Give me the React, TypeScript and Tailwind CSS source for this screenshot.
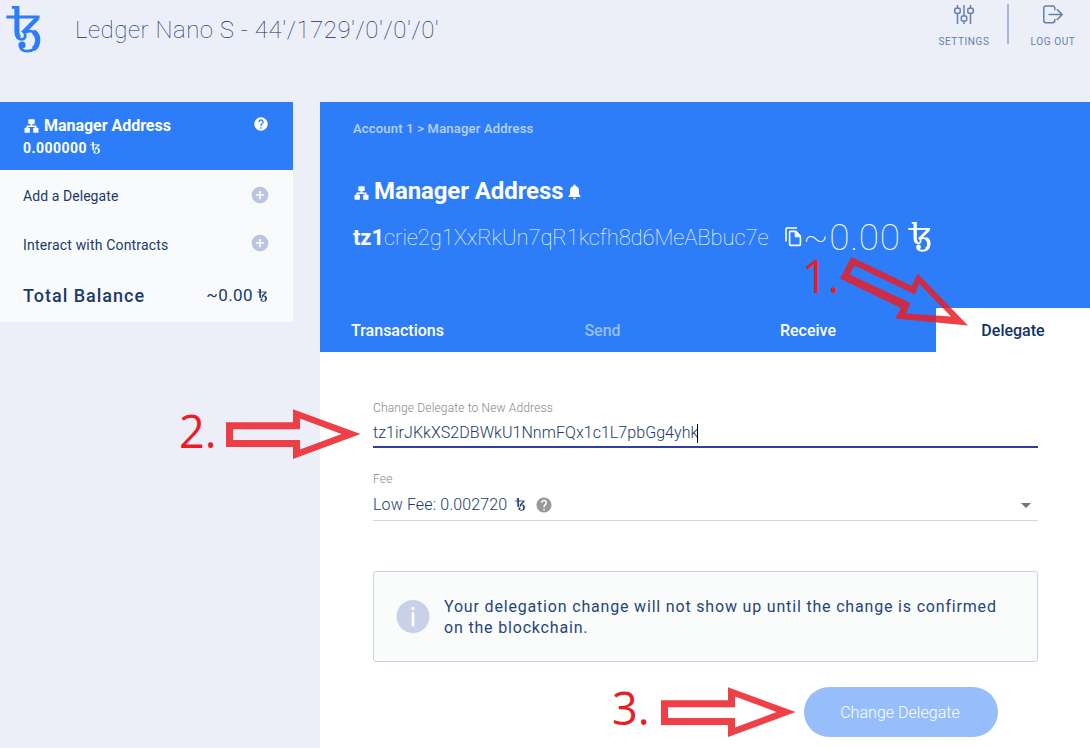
import React from "react";
import { MdAddCircle, MdHelp, MdNotifications, MdArrowDropDown } from "react-icons/md";

function Tez({ className }: { className: string }) {
  return (
    <svg viewBox="0 0 35 47" preserveAspectRatio="none" className={className} fill="none" stroke="currentColor">
      <path d="M5.8 1.4H11V26C11 31.5 13 33.4 15.6 33.4C18.4 33.4 20 31 19 27.6" strokeWidth="2.8" />
      <path d="M10.9 0.1V26Q10.9 29.5 13 32" strokeWidth="5" />
      <path d="M0.4 10.9H33.6" strokeWidth="3" />
      <path d="M31.8 11.8L16.8 27" strokeWidth="4.4" />
      <path d="M17.5 26.8C27 22.5 33 27.5 32.2 35C31.5 42 27 45.3 21 45.1C17 45 13.8 43 14.5 39.5" strokeWidth="2.9" />
      <path d="M27.4 25.8Q32.3 29 31.6 35.5Q31 40.5 27.5 43" strokeWidth="5.2" />
      <circle cx="16" cy="39" r="3.6" fill="currentColor" stroke="none" />
    </svg>
  );
}

function Sitemap({ className }: { className: string }) {
  return (
    <svg viewBox="0 0 14 14" className={className} fill="currentColor">
      <rect x="3.8" y="0.3" width="6.4" height="4.8" rx="0.8" />
      <rect x="0" y="8.8" width="5.4" height="4.9" rx="0.8" />
      <rect x="8.6" y="8.8" width="5.4" height="4.9" rx="0.8" />
      <path d="M6.1 4.5h1.8v1.9h4.1v3h-1.7V8h-6.6v1.4H2v-3h4.1z" />
    </svg>
  );
}

function Bell() {
  return (
    <svg viewBox="0 0 13 16" className="ml-[5px] mt-px h-4 w-[13px]" fill="currentColor">
      <path d="M6.5 0.6Q7.6 0.6 7.7 1.9Q10.9 2.8 11 6.6V10.2L12.6 12.3V13H0.4V12.3L2 10.2V6.6Q2.1 2.8 5.3 1.9Q5.4 0.6 6.5 0.6ZM5 13.8H8Q7.8 15.3 6.5 15.3Q5.2 15.3 5 13.8Z" />
    </svg>
  );
}

function CopyIcon() {
  return (
    <svg viewBox="0 0 17 20" className="ml-px h-5 w-[17px]" fill="none" stroke="currentColor" strokeWidth="1.6">
      <path d="M1 14.5V2Q1 1 2 1H12" />
      <path d="M5.4 4.4H10.8L15.4 9V17.6Q15.4 18.4 14.6 18.4H5.4Q4.6 18.4 4.6 17.6V5.2Q4.6 4.4 5.4 4.4Z" />
      <path d="M10.2 4.4V9.8H15.4Z" fill="currentColor" strokeWidth="1" />
    </svg>
  );
}

function SettingsIcon() {
  return (
    <svg viewBox="0 0 22 22" className="h-[22px] w-[22px]" fill="none" stroke="currentColor" strokeWidth="1.5">
      <path d="M4.5 1v3.5M4.5 10v10M11 1v11M11 17.5V20M17.5 1v3.5M17.5 10v10" />
      <rect x="1.8" y="4.3" width="5.4" height="5" rx="1.2" />
      <rect x="8.3" y="12" width="5.4" height="5" rx="1.2" />
      <rect x="14.8" y="4.3" width="5.4" height="5" rx="1.2" />
    </svg>
  );
}

function LogoutIcon() {
  return (
    <svg viewBox="0 0 22 20" className="h-5 w-[22px]" fill="none" stroke="currentColor" strokeWidth="1.5">
      <path d="M12.8 5.2V3.2Q12.8 1 10.6 1H4Q1.8 1 1.8 3.2v12.4q0 2.2 2.2 2.2h6.6q2.2 0 2.2-2.2V14M6.5 9.6H20M14.8 4.2l5.4 5.4-5.4 5.4" />
    </svg>
  );
}

function Arrow({ className }: { className: string }) {
  return (
    <svg viewBox="0 0 136 51" className={className} fill="#ed1c24" fillOpacity="0.84" fillRule="evenodd">
      <path d="M0 13.2H67V0.2L134.5 25L67 50V38H0ZM7 20.2V31H74V40.5L115.5 25L74 9.5V20.2Z" />
    </svg>
  );
}

export default function App() {
  return (
    <div className="relative flex h-[748px] w-[1090px] flex-col overflow-hidden bg-[#eceff8] font-['Roboto',sans-serif] text-[#1a3a6b]">
      <header className="flex h-[102px] shrink-0 items-start">
        <Tez className="ml-[6px] mt-[6px] h-[47px] w-[35px] text-[#2c7df7]" />
        <h1 className="ml-[34px] mt-[12px] w-[420px] whitespace-nowrap text-[24px] font-thin leading-[36px] tracking-[0.54px] text-[#123262]">
          Ledger Nano S - 44'/1729'/0'/0'/0'
        </h1>
        <div className="ml-auto flex text-[#6480ab]">
          <div className="flex w-[87px] flex-col items-center pl-px pt-[4px]">
            <SettingsIcon />
            <span className="mt-[8px] text-[10px] leading-[16px] tracking-[0.6px]">SETTINGS</span>
          </div>
          <div className="mt-[4px] h-[40px] w-[2px] bg-[#a7b7d9]" />
          <div className="flex w-[81px] flex-col items-center pl-[7px] pt-[5px]">
            <LogoutIcon />
            <span className="mt-[9px] text-[10px] leading-[16px] tracking-[0.6px]">LOG OUT</span>
          </div>
        </div>
      </header>

      <div className="flex grow items-start">
        <aside className="h-[220px] w-[293px] bg-[#f8fafc]">
          <div className="flex h-[68px] justify-between bg-[#2c7df7] pl-[23px] pr-[24px] pt-[14px] text-white">
            <div>
              <div className="flex h-[20px] items-center gap-[5px] whitespace-nowrap pl-px text-[16px] font-bold tracking-[-0.03px]">
                <Sitemap className="h-[14px] w-[15px]" />
                Manager Address
              </div>
              <div className="mt-[2px] flex h-[20px] items-center gap-[3px] text-[14px] font-bold tracking-[0.45px]">
                0.000000
                <Tez className="h-[12px] w-[10px]" />
              </div>
            </div>
            <MdHelp className="h-[16px] w-[16px]" />
          </div>
          <div className="flex h-[50px] items-center justify-between pl-[23px] pr-[23px] text-[14px]">
            <span className="mt-[2px] tracking-[0.07px]">Add a Delegate</span>
            <MdAddCircle className="-mt-px h-5 w-5 text-[#b9c5e1]" />
          </div>
          <div className="flex h-[47px] items-center justify-between pl-[23px] pr-[23px] text-[14px]">
            <span className="mt-[3px] tracking-[0.18px]">Interact with Contracts</span>
            <MdAddCircle className="-mt-[2px] h-5 w-5 text-[#b9c5e1]" />
          </div>
          <div className="flex h-[57px] items-center justify-between pl-[23px] pr-[26px]">
            <span className="text-[18px] font-medium tracking-[1px]">Total Balance</span>
            <span className="flex items-center gap-[4px] text-[17px] tracking-[0.4px]">
              ~0.00
              <Tez className="h-[13px] w-[10px]" />
            </span>
          </div>
        </aside>

        <main className="ml-[27px] h-[646px] w-[770px] bg-white">
          <section className="h-[250px] bg-[#2c7df7] text-white">
            <div className="h-[206px] pl-[33px] pt-[17px]">
              <div className="h-[20px] text-[13px] font-medium leading-[20px] tracking-[0.2px] text-white/65">Account 1 &gt; Manager Address</div>
              <div className="mt-[37px] flex h-[30px] items-center whitespace-nowrap text-[24px] font-bold tracking-[-0.1px]">
                <Sitemap className="ml-px mr-[5px] mt-[3px] h-[14px] w-[15px]" />
                Manager Address
                <Bell />
              </div>
              <div className="mt-[11px] flex h-[40px] items-center whitespace-nowrap">
                <div className="w-[431px] text-[22px] font-thin tracking-[-0.08px]">
                  <span className="font-bold">tz1</span>crie2g1XxRkUn7qR1kcfh8d6MeABbuc7e
                </div>
                <CopyIcon />
                <span className="ml-px mt-[2px] w-[101px] text-[37px] font-thin leading-[40px] tracking-[0.7px]">~0.00</span>
                <Tez className="ml-[4px] h-[30px] w-[23px]" />
              </div>
            </div>
            <nav className="flex h-[44px] whitespace-nowrap text-center text-[16px] font-medium leading-[45px]">
              <div className="w-[155px]">Transactions</div>
              <div className="ml-[51px] w-[153px] text-white/50">Send</div>
              <div className="ml-[52px] w-[154px]">Receive</div>
              <div className="ml-[51px] w-[154px] bg-white text-[#123262]">Delegate</div>
            </nav>
          </section>

          <section className="flex flex-col px-[53px] pt-[46px]">
            <label className="h-[20px] text-[12px] font-light leading-[20px] tracking-[0.15px] text-[#888]">Change Delegate to New Address</label>
            <div className="flex h-[30px] w-[665px] items-center border-b-2 border-[#303f9f] pt-[2px] text-[16px] font-light tracking-[0.05px]">
              tz1irJKkXS2DBWkU1NnmFQx1c1L7pbGg4yhk
              <span className="-ml-px h-[19px] w-px bg-black" />
            </div>
            <label className="mt-[21px] h-[20px] text-[12px] font-light leading-[20px] tracking-[0.15px] text-[#888]">Fee</label>
            <div className="flex h-[32px] w-[665px] items-center border-b border-[#d8d8d8] pt-px text-[16px] font-light tracking-[0.13px]">
              Low Fee: 0.002720
              <Tez className="-mt-[2px] ml-[8px] h-[13px] w-[10px]" />
              <MdHelp className="ml-[10px] h-[18px] w-[18px] text-[#999]" />
              <MdArrowDropDown className="-mt-px ml-auto h-6 w-6 text-[#757575]" />
            </div>
            <div className="mt-[50px] flex h-[91px] w-[665px] items-center rounded-[3px] border border-[#c8d1e7] bg-[#fafcfc] pl-[22px]">
              <svg viewBox="0 0 34 34" className="h-[34px] w-[34px]">
                <circle cx="17" cy="16.5" r="16.5" fill="#c8d1e7" />
                <circle cx="17" cy="8.5" r="1.7" fill="white" />
                <path d="M17 13.5V25" stroke="white" strokeWidth="2.8" strokeLinecap="round" />
              </svg>
              <p className="ml-[14px] whitespace-nowrap text-[16px] leading-[21px] tracking-[0.82px] text-[#25457a]">
                Your delegation change will not show up until the change is confirmed
                <br />
                on the blockchain.
              </p>
            </div>
            <button className="ml-[431px] mt-[25px] h-[50px] w-[194px] rounded-full bg-[#96befb] pr-[2px] pt-px text-[16px] font-light tracking-[0.03px] text-white">Change Delegate</button>
          </section>
        </main>
      </div>

      <span className="absolute left-[802px] top-[246px] font-['Open_Sans',sans-serif] text-[45px] leading-[60px] text-[#ed1c24]">1.</span>
      <span className="absolute left-[179px] top-[401px] font-['Open_Sans',sans-serif] text-[45px] leading-[60px] text-[#ed1c24]">2.</span>
      <span className="absolute left-[612px] top-[678px] font-['Open_Sans',sans-serif] text-[45px] leading-[60px] text-[#ed1c24]">3.</span>
      <svg viewBox="0 0 130 74" className="absolute left-[838px] top-[254px] h-[74px] w-[130px]" fill="#ed1c24" fillOpacity="0.84" fillRule="evenodd">
        <path d="M13.5 3L74 32L79.5 19.5L130 71.5L57 64.5L63 54L2 24.5ZM16.5 11.5L11.5 20.5L72.5 49L68 59.5L113 62.5L81 29.5L77 40.5Z" />
      </svg>
      <Arrow className="absolute left-[226px] top-[409px] h-[51px] w-[136px]" />
      <Arrow className="absolute left-[661px] top-[687px] h-[51px] w-[136px]" />
    </div>
  );
}
